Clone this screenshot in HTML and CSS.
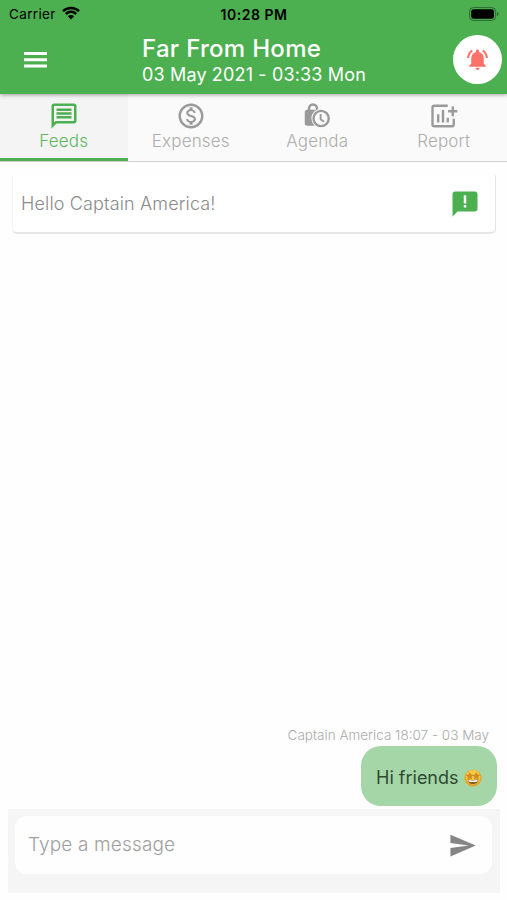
FILE: index.html
```
<!DOCTYPE html>
<html lang="en">
  <head>
    <meta charset="utf-8">
    <title>Far From Home</title>
    <link rel="stylesheet" href="styles.css">
  </head>
  <body>
    <header class="header">
      <div class="status-bar">
        <div class="carrier">
          <span class="carrier-name">Carrier</span>
          <svg class="wifi" viewBox="0 0 18 14">
            <path d="M1 5.2a11.4 11.4 0 0 1 16 0M3.8 8a7.4 7.4 0 0 1 10.4 0" fill="none" stroke="#000" stroke-width="2.5"/>
            <path d="M9 13.5L5.9 10.3a4.4 4.4 0 0 1 6.2 0z"/>
          </svg>
        </div>
        <span class="time">10:28 PM</span>
        <svg class="battery" viewBox="0 0 30 14">
          <rect x=".6" y=".6" width="26" height="12.8" rx="3.8" fill="none" stroke="#000" stroke-opacity=".4"/>
          <rect x="2.2" y="2.2" width="22.8" height="9.6" rx="2.4"/>
          <path d="M28 4.8c2 .8 2 3.6 0 4.4z" opacity=".45"/>
        </svg>
      </div>

      <div class="toolbar">
        <svg class="menu-icon" viewBox="0 0 23 16">
          <path d="M0 0h23v3H0zM0 6.3h23v3H0zM0 12.6h23v3H0z"/>
        </svg>
        <div class="trip">
          <div class="trip-name">Far From Home</div>
          <div class="trip-date">03 May 2021 - 03:33 Mon</div>
        </div>
        <div class="bell-button">
          <svg class="bell" viewBox="0 0 24 24">
            <path d="M7.58 4.08L6.15 2.65C3.75 4.48 2.17 7.3 2.03 10.5h2c.15-2.65 1.51-4.97 3.55-6.42zm12.39 6.42h2c-.15-3.2-1.73-6.02-4.12-7.85l-1.42 1.43c2.02 1.45 3.39 3.77 3.54 6.42zM18 11c0-3.07-1.64-5.64-4.5-6.32V4c0-.83-.67-1.5-1.5-1.5s-1.5.67-1.5 1.5v.68C7.63 5.36 6 7.92 6 11v5l-2 2v1h16v-1l-2-2v-5zm-6 11c.14 0 .27-.01.4-.04.65-.14 1.18-.58 1.44-1.18.1-.24.15-.5.15-.78h-4c.01 1.1.9 2 2.01 2z"/>
          </svg>
        </div>
      </div>
    </header>

    <nav class="tabs">
      <div class="tab tab-active">
        <svg class="tab-icon" viewBox="0 0 24 24">
          <path d="M4 4h16v12H5.17L4 17.17V4m0-2c-1.1 0-1.99.9-1.99 2L2 22l4-4h14c1.1 0 2-.9 2-2V4c0-1.1-.9-2-2-2H4zm2 10h12v2H6v-2zm0-3h12v2H6V9zm0-3h12v2H6V6z"/>
        </svg>
        <span class="tab-label">Feeds</span>
      </div>
      <div class="tab">
        <svg class="tab-icon" viewBox="0 0 24 24">
          <path d="M12 2C6.48 2 2 6.48 2 12s4.48 10 10 10 10-4.48 10-10S17.52 2 12 2zm0 18c-4.41 0-8-3.59-8-8s3.59-8 8-8 8 3.59 8 8-3.59 8-8 8zm.31-8.86c-1.77-.45-2.34-.94-2.34-1.67 0-.84.79-1.43 2.1-1.43 1.38 0 1.9.66 1.94 1.64h1.71c-.05-1.34-.87-2.57-2.49-2.97V5H10.9v1.69c-1.51.32-2.72 1.3-2.72 2.81 0 1.79 1.49 2.69 3.66 3.21 1.95.46 2.34 1.15 2.34 1.87 0 .53-.39 1.39-2.1 1.39-1.6 0-2.23-.72-2.32-1.64H8.04c.1 1.7 1.36 2.66 2.86 2.97V19h2.34v-1.67c1.52-.29 2.72-1.16 2.73-2.77-.01-2.2-1.9-2.96-3.66-3.42z"/>
        </svg>
        <span class="tab-label">Expenses</span>
      </div>
      <div class="tab">
        <svg class="tab-icon" viewBox="0 0 24 24">
          <path d="M5.6 8V6a3.2 3.2 0 0 1 6.4 0v2" fill="none" stroke="#9a9a9a" stroke-width="2"/>
          <path d="M4.2 7h9.2a2 2 0 0 1 2 2v10.8H4.2a2 2 0 0 1-2-2V9a2 2 0 0 1 2-2z"/>
          <circle class="clock" cx="15.3" cy="14" r="7.8"/>
          <circle cx="15.3" cy="14" r="6.1" fill="none" stroke="#9a9a9a" stroke-width="1.9"/>
          <path d="M14.9 10.4v4.2l2.7 2" fill="none" stroke="#9a9a9a" stroke-width="1.5"/>
        </svg>
        <span class="tab-label">Agenda</span>
      </div>
      <div class="tab">
        <svg class="tab-icon" viewBox="0 0 24 24">
          <path d="M15 3.8H4.3a1.5 1.5 0 0 0-1.5 1.5v13.4a1.5 1.5 0 0 0 1.5 1.5h14a1.5 1.5 0 0 0 1.5-1.5v-4.5M15.3 8.2h7.4M19 4.4v7.8" fill="none" stroke="#9a9a9a" stroke-width="1.9"/>
          <path d="M6.4 10.5h1.9v6.7H6.4zM10.2 7.2h2v10h-2zM14.1 13.4h1.9v3.8h-1.9z"/>
        </svg>
        <span class="tab-label">Report</span>
      </div>
    </nav>

    <main class="feed">
      <div class="notice">
        <span class="notice-text">Hello Captain America!</span>
        <svg class="notice-icon" viewBox="0 0 24 24">
          <path d="M20 2H4c-1.1 0-1.99.9-1.99 2L2 22l4-4h14c1.1 0 2-.9 2-2V4c0-1.1-.9-2-2-2zm-7 12.8h-2v-2h2v2zm0-3.2h-2V5h2v6.6z"/>
        </svg>
      </div>

      <div class="message">
        <div class="message-info">Captain America 18:07 - 03 May</div>
        <div class="bubble">
          <span>Hi friends</span>
          <svg class="emoji" viewBox="0 0 18 18">
            <circle cx="9" cy="9" r="8.6" fill="#e3a62b"/>
            <circle cx="9" cy="8" r="7.2" fill="#f5c945"/>
            <path d="M5.7 3l1.2 2.5 2.7.4-2 1.9.5 2.7-2.4-1.3-2.4 1.3.5-2.7-2-1.9 2.7-.4zM12.3 3l1.2 2.5 2.7.4-2 1.9.5 2.7-2.4-1.3-2.4 1.3.5-2.7-2-1.9 2.7-.4z" fill="#cf8a20"/>
            <path d="M3.7 10.2q5.3 1.6 10.6 0c-.3 6.5-10.3 6.5-10.6 0z" fill="#8a5a1c"/>
            <path d="M4.2 10.8q4.8 1.3 9.6 0l-.5 1.7q-4.3 1-8.6 0z" fill="#fff"/>
          </svg>
        </div>
      </div>
    </main>

    <footer class="composer">
      <div class="input-box">
        <span class="placeholder">Type a message</span>
        <svg class="send" viewBox="0 0 24 24">
          <path d="M2.01 21L23 12 2.01 3 2 10l15 2-15 2z"/>
        </svg>
      </div>
    </footer>
  </body>
</html>
```
FILE: styles.css
```
* {
  box-sizing: border-box;
}

body {
  margin: 0;
  width: 507px;
  height: 900px;
  display: flex;
  flex-direction: column;
  background-color: #fefefe;
  font-family: Inter, Roboto, sans-serif;
  overflow: hidden;
}

svg {
  display: block;
  flex-shrink: 0;
}

.header {
  height: 94px;
  flex-shrink: 0;
  background-color: #4caf50;
  box-shadow: 0 1px 4px rgba(0, 0, 0, 0.35);
  z-index: 1;
}

.status-bar {
  height: 27px;
  padding: 0 8px 0 9px;
  display: grid;
  grid-template-columns: 1fr auto 1fr;
  align-items: center;
  font-size: 14px;
  line-height: 27px;
}

.carrier {
  display: flex;
  align-items: center;
  gap: 6px;
}

.carrier-name {
  width: 47px;
  font-size: 13.5px;
  letter-spacing: 0.35px;
  padding-top: 1px;
}

.wifi {
  width: 18px;
  height: 14px;
  margin-bottom: 2px;
}

.time {
  font-weight: 600;
  font-size: 14px;
  letter-spacing: 0.5px;
}

.battery {
  width: 30px;
  height: 14px;
  justify-self: end;
  margin-bottom: 1px;
}

.toolbar {
  height: 67px;
  padding: 0 5px 0 24px;
  display: flex;
  align-items: center;
  color: white;
}

.menu-icon {
  width: 23px;
  height: 16px;
  fill: white;
  margin-bottom: 2px;
}

.trip {
  margin-left: 95px;
  flex: 1;
}

.trip-name {
  font-size: 24px;
  line-height: 28px;
  font-weight: 500;
  letter-spacing: 0.3px;
}

.trip-date {
  font-size: 18px;
  line-height: 24px;
  letter-spacing: 0.15px;
}

.bell-button {
  width: 49px;
  height: 49px;
  margin-bottom: 2px;
  border-radius: 50%;
  background-color: white;
  display: flex;
  align-items: center;
  justify-content: center;
}

.bell {
  width: 25px;
  height: 25px;
  fill: #fa7268;
}

.tabs {
  height: 68px;
  flex-shrink: 0;
  display: grid;
  grid-template-columns: 127.5px 1fr 1fr 1fr;
  background-color: #fafafa;
  border-bottom: 1px solid #cfcfcf;
}

.tab {
  height: 67px;
  padding-top: 7px;
  display: flex;
  flex-direction: column;
  align-items: center;
  color: #adadad;
}

.tab-active {
  background-color: #f4f4f4;
  border-bottom: 3px solid #4caf50;
  color: #5fb762;
}

.tab-icon {
  width: 30px;
  height: 30px;
  fill: #9a9a9a;
}

.tab-active .tab-icon {
  fill: #4caf50;
}

.tab-icon .clock {
  fill: #fafafa;
}

.tab-label {
  font-size: 17px;
  line-height: 20px;
  font-weight: 300;
  letter-spacing: 0.15px;
}

.feed {
  flex: 1;
  display: flex;
  flex-direction: column;
  justify-content: space-between;
  padding: 11px 10px 3px 12px;
}

.notice {
  width: 484px;
  height: 61px;
  padding: 1px 15px 0 8px;
  display: flex;
  align-items: center;
  justify-content: space-between;
  background-color: white;
  border: 1px solid #f5f5f5;
  border-top-color: #fdfdfd;
  border-right-color: #e4e4e4;
  border-bottom: 2px solid #e6e6e6;
  border-radius: 5px;
}

.notice-text {
  color: #8a8a8a;
  font-size: 18px;
  font-weight: 300;
  letter-spacing: 0.15px;
}

.notice-icon {
  width: 30px;
  height: 30px;
  fill: #4caf50;
}

.message {
  display: flex;
  flex-direction: column;
  align-items: flex-end;
}

.message-info {
  color: #ababab;
  font-size: 13.5px;
  line-height: 20px;
  font-weight: 300;
  margin: 0 8px 1px 0;
}

.bubble {
  width: 136px;
  height: 60px;
  padding: 3px 15px 0;
  border-radius: 20px;
  background-color: #a5d6a7;
  color: #2f4a31;
  display: flex;
  align-items: center;
  justify-content: space-between;
  font-size: 18px;
  white-space: nowrap;
}

.emoji {
  width: 18px;
  height: 18px;
}

.composer {
  width: 492px;
  height: 84px;
  flex-shrink: 0;
  margin: 0 0 7px 8px;
  padding: 7px 8px 0 7px;
  background-color: #f5f5f5;
}

.input-box {
  height: 58px;
  padding: 0 15px 2px 13px;
  border-radius: 12px;
  background-color: #fefefe;
  display: flex;
  align-items: center;
  justify-content: space-between;
}

.placeholder {
  color: #a0a0a0;
  font-size: 19px;
  font-weight: 300;
  letter-spacing: 0.15px;
}

.send {
  width: 29px;
  height: 29px;
  margin-top: 2px;
  fill: #858585;
}
```
